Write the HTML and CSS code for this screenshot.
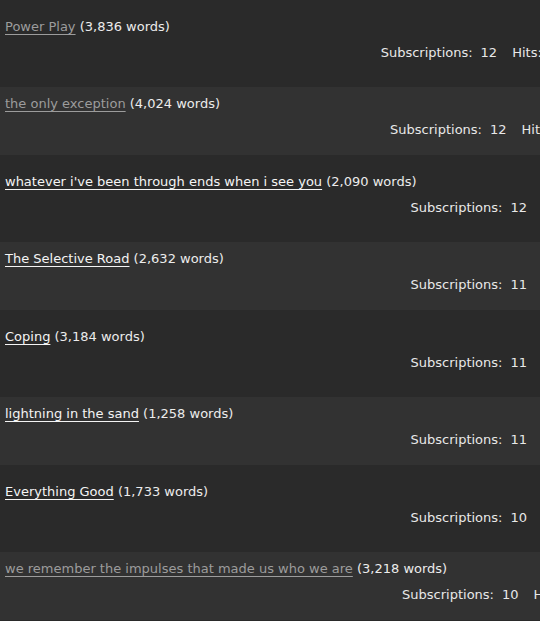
FILE: index.html
```html
<!DOCTYPE html>
<html lang="en">
<head>
<meta charset="utf-8">
<title>Subscriptions</title>
<link rel="stylesheet" href="styles.css">
</head>
<body>
<ul class="works">
  <li class="work">
    <p class="heading"><a class="title visited" href="#">Power Play</a> (3,836 words)</p>
    <dl class="stats stats--hits-1">
      <div class="stat"><dt>Subscriptions:</dt><dd>12</dd></div>
      <div class="stat"><dt>Hits:</dt><dd>1,402</dd></div>
    </dl>
  </li>
  <li class="work">
    <p class="heading"><a class="title visited" href="#">the only exception</a> (4,024 words)</p>
    <dl class="stats stats--hits-2">
      <div class="stat"><dt>Subscriptions:</dt><dd>12</dd></div>
      <div class="stat"><dt>Hits:</dt><dd>988</dd></div>
    </dl>
  </li>
  <li class="work">
    <p class="heading"><a class="title" href="#">whatever i've been through ends when i see you</a> (2,090 words)</p>
    <dl class="stats">
      <div class="stat"><dt>Subscriptions:</dt><dd>12</dd></div>
    </dl>
  </li>
  <li class="work">
    <p class="heading"><a class="title" href="#">The Selective Road</a> (2,632 words)</p>
    <dl class="stats">
      <div class="stat"><dt>Subscriptions:</dt><dd>11</dd></div>
    </dl>
  </li>
  <li class="work">
    <p class="heading"><a class="title" href="#">Coping</a> (3,184 words)</p>
    <dl class="stats">
      <div class="stat"><dt>Subscriptions:</dt><dd>11</dd></div>
    </dl>
  </li>
  <li class="work">
    <p class="heading"><a class="title" href="#">lightning in the sand</a> (1,258 words)</p>
    <dl class="stats">
      <div class="stat"><dt>Subscriptions:</dt><dd>11</dd></div>
    </dl>
  </li>
  <li class="work">
    <p class="heading"><a class="title" href="#">Everything Good</a> (1,733 words)</p>
    <dl class="stats">
      <div class="stat"><dt>Subscriptions:</dt><dd>10</dd></div>
    </dl>
  </li>
  <li class="work">
    <p class="heading"><a class="title visited" href="#">we remember the impulses that made us who we are</a> (3,218 words)</p>
    <dl class="stats stats--hits-3">
      <div class="stat"><dt>Subscriptions:</dt><dd>10</dd></div>
      <div class="stat"><dt>Hits:</dt><dd>714</dd></div>
    </dl>
  </li>
</ul>
</body>
</html>
```

FILE: styles.css
```css
html, body {
  margin: 0;
  padding: 0;
  background: #2a2a2a;
  overflow: hidden;
}

body {
  font-family: "DejaVu Sans", "Liberation Sans", sans-serif;
  font-size: 13px;
  line-height: 20px;
  color: #ececec;
}

.works {
  list-style: none;
  margin: 0;
  padding: 0;
}

.work {
  display: flex;
  flex-direction: column;
  gap: 6px;
  background: #2a2a2a;
  padding: 17px 0 24px;
}

.work:nth-child(even) {
  background: #323232;
  padding: 7px 0 15px;
}

.heading {
  margin: 0;
  padding-left: 5px;
  white-space: nowrap;
}

.title {
  color: #f4f4f4;
  text-decoration: underline;
  text-decoration-thickness: 1px;
  text-underline-offset: 3px;
}

.title.visited {
  color: #9c9c9c;
}

.stats {
  display: flex;
  justify-content: flex-end;
  gap: 15px;
  margin: 0;
  padding-right: 13px;
  white-space: nowrap;
  color: #e8e8e8;
}

.stat {
  display: flex;
  gap: 8px;
}

.stat dt,
.stat dd {
  margin: 0;
}

/* rows that also list hits run past the right edge */
.stats--hits-1 { margin-right: -60px; }
.stats--hits-2 { margin-right: -57px; }
.stats--hits-3 { margin-right: -69px; }
```
